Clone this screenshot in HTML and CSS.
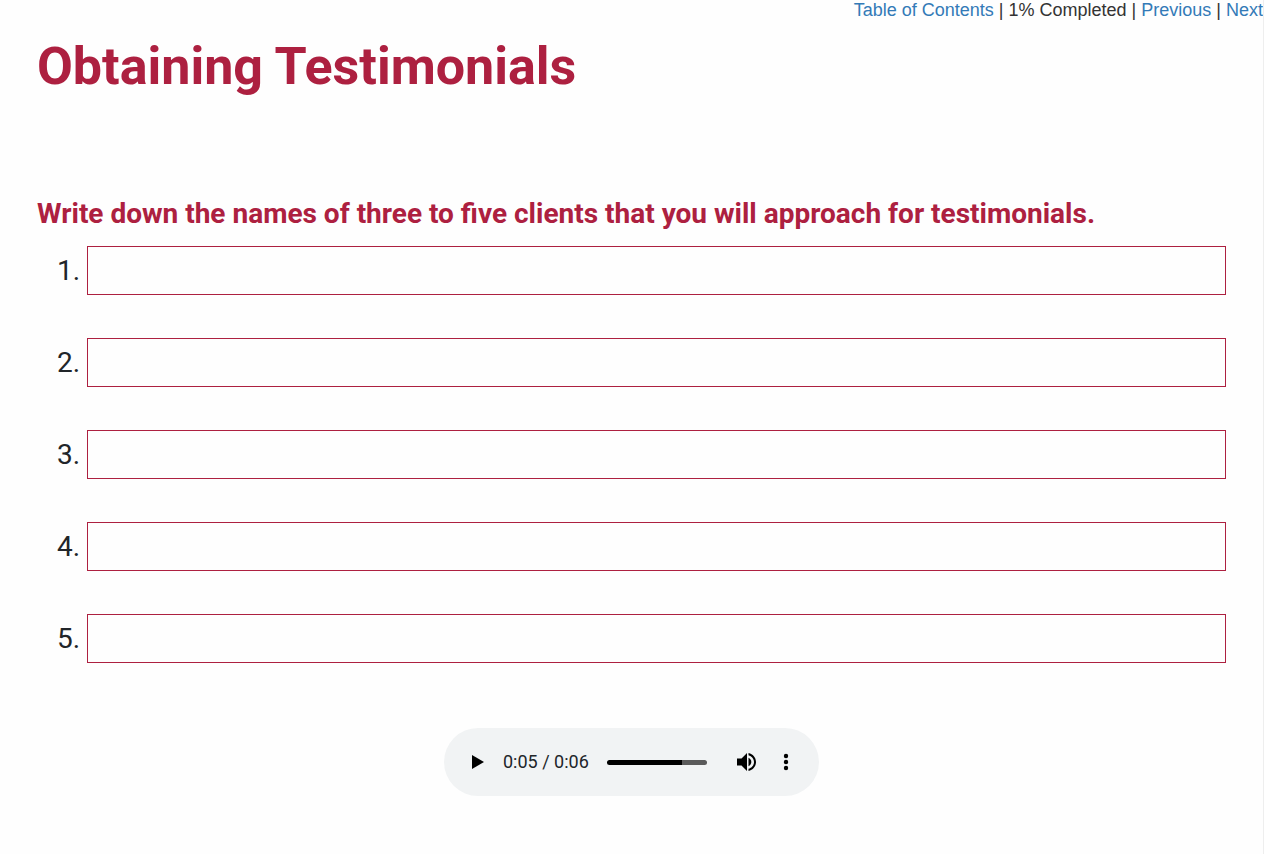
FILE: index.html
```html
<!DOCTYPE html>
<html lang="en">
<head>
    <meta charset="UTF-8">
    <meta name="viewport" content="width=device-width, initial-scale=1.0">
    <title>Obtaining Testimonials</title>
    <link rel="stylesheet" href="styles.css">
</head>
<body>
    <nav class="topnav">
        <a href="#">Table of Contents</a> | 1% Completed | <a href="#">Previous</a> | <a href="#">Next</a>
    </nav>
    <main class="content">
        <h1 class="title">Obtaining Testimonials</h1>
        <h2 class="question">Write down the names of three to five clients that you will approach for testimonials.</h2>
        <form class="clients">
            <div class="row"><label for="client1">1.</label><input type="text" id="client1"></div>
            <div class="row"><label for="client2">2.</label><input type="text" id="client2"></div>
            <div class="row"><label for="client3">3.</label><input type="text" id="client3"></div>
            <div class="row"><label for="client4">4.</label><input type="text" id="client4"></div>
            <div class="row"><label for="client5">5.</label><input type="text" id="client5"></div>
        </form>
        <div class="player">
            <button type="button" class="bt-play" aria-label="Play">
                <svg width="12" height="14" viewBox="0 0 12 14"><path d="M0 0v14l12-7z"/></svg>
            </button>
            <span class="time">0:05 / 0:06</span>
            <input type="range" class="seek" min="0" max="100" value="75" aria-label="Seek">
            <button type="button" class="bt-mute" aria-label="Mute">
                <svg width="20" height="20" viewBox="0 0 20 20">
                    <path d="M0 6.500v7h4.500L10 19V1L4.500 6.500z"/>
                    <path d="M11.500 5.800v8.400c1.700-.8 2.800-2.300 2.800-4.200s-1.100-3.400-2.800-4.200z"/>
                    <path d="M11.500 1v2.200c3.200.8 5.500 3.500 5.500 6.800s-2.300 6-5.500 6.800V19c4.400-.9 7.500-4.600 7.500-9s-3.100-8.100-7.500-9z"/>
                </svg>
            </button>
            <button type="button" class="bt-more" aria-label="More options">
                <svg width="6" height="18" viewBox="0 0 6 18"><circle cx="3" cy="3" r="2.200"/><circle cx="3" cy="9" r="2.200"/><circle cx="3" cy="15" r="2.200"/></svg>
            </button>
        </div>
    </main>
</body>
</html>
```
FILE: styles.css
```css
* {
    box-sizing: border-box;
}

body {
    margin: 0;
    min-height: 100vh;
    border-right: 1px solid #eeeeee;
    background-color: #fefefe;
    color: #212529;
    font-family: Roboto, sans-serif;
}

.topnav {
    text-align: right;
    font: 18px/20px "Liberation Sans", Arial, sans-serif;
    color: #333333;
}
.topnav a {
    color: #337ab7;
    text-decoration: none;
}

.content {
    padding: 16px 37px 0;
}

.title {
    margin: 0;
    font-size: 52px;
    line-height: 62px;
    color: #ad2040;
}

.question {
    margin: 98px 0 14px;
    font-size: 28px;
    line-height: 36px;
    color: #ad2040;
}

.clients {
    display: flex;
    flex-direction: column;
    gap: 43px;
}
.row {
    display: flex;
    align-items: center;
}
.row label {
    width: 50px;
    padding-left: 20px;
    font-size: 28px;
    line-height: 32px;
}
.row input {
    flex: 1;
    height: 49px;
    padding: 0 12px;
    border: 1px solid #ad2040;
    background: none;
    font: 28px Roboto, sans-serif;
}

.player {
    display: flex;
    align-items: center;
    width: 375px;
    height: 68px;
    margin: 65px auto 0;
    padding: 0 24px;
    border-radius: 34px;
    background-color: #f1f3f4;
}
.player button {
    display: flex;
    padding: 0;
    border: 0;
    background: none;
}
.player .bt-play {
    padding-left: 4px;
}
.time {
    margin-left: 19px;
    font-size: 18px;
    line-height: 20px;
}
.seek {
    appearance: none;
    width: 100px;
    height: 5px;
    margin: 0 0 0 18px;
    border-radius: 3px;
    background: linear-gradient(to right, #000000 75%, #5a5a5a 75%);
}
.seek::-webkit-slider-thumb {
    appearance: none;
    width: 0;
    height: 0;
}
.player .bt-mute {
    margin-left: 30px;
}
.player .bt-more {
    margin-left: 26px;
}
```
